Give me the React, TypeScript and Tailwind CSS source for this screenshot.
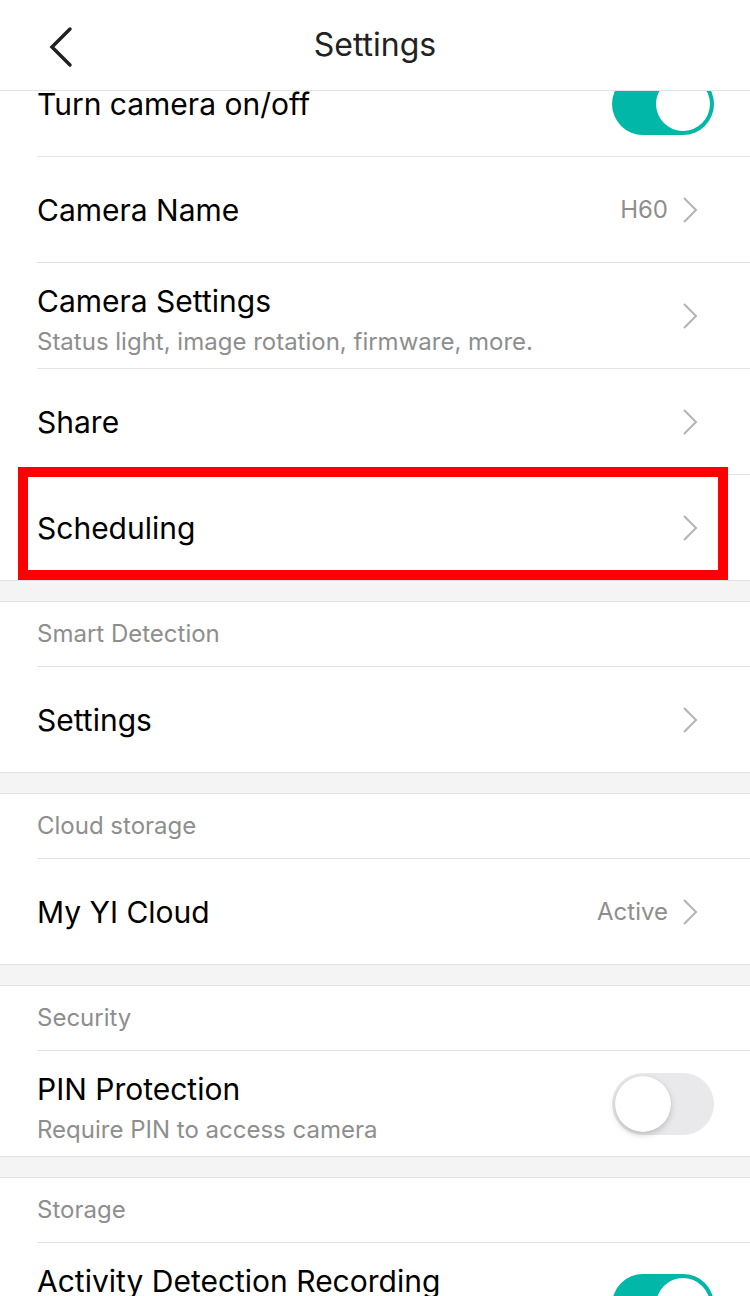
import type { ReactNode } from "react";

function Chevron() {
  return (
    <svg width="16" height="28" viewBox="0 0 16 28" className="shrink-0">
      <path d="M2 2 L14 14 L2 26" fill="none" stroke="#b3b3b3" strokeWidth="2" />
    </svg>
  );
}

function Toggle({ on }: { on: boolean }) {
  if (on) {
    return (
      <div className="w-[102px] h-[62px] rounded-full bg-[#00b7a8] flex items-center justify-end pr-[4px] shrink-0">
        <div className="w-[54px] h-[54px] rounded-full bg-white" />
      </div>
    );
  }
  return (
    <div className="w-[102px] h-[62px] rounded-full bg-[#e9e9eb] flex items-center pl-[3px] shrink-0">
      <div className="w-[56px] h-[56px] rounded-full bg-white shadow-[0_3px_6px_rgba(0,0,0,0.18),0_0_1px_rgba(0,0,0,0.15)]" />
    </div>
  );
}

type RowProps = {
  title: string;
  subtitle?: string;
  value?: string;
  right?: ReactNode;
  last?: boolean;
  tall?: boolean;
};

function Row({ title, subtitle, value, right, last, tall }: RowProps) {
  let size = last ? "h-[105px]" : "h-[106px] border-b border-[#e3e3e3]";
  if (tall) size = "h-[124px]";
  return (
    <div className={"ml-[37px] flex items-center " + size}>
      <div className={"flex-1 flex flex-col " + (tall ? "pb-[48px]" : subtitle ? "pt-[8px]" : "")}>
        <p className="text-[30px] leading-[36px] text-black">{title}</p>
        {subtitle && <p className="text-[24px] leading-[28px] mt-[9px] text-[#8e8e8e]">{subtitle}</p>}
      </div>
      {right ?? (
        <div className="flex items-center gap-[14px] pr-[52px]">
          {value && <span className="text-[24px] text-[#8e8e8e]">{value}</span>}
          <Chevron />
        </div>
      )}
    </div>
  );
}

function SectionTitle({ children }: { children: string }) {
  return (
    <div className="ml-[37px] h-[65px] flex items-center border-b border-[#e3e3e3]">
      <p className="text-[24px] text-[#8e8e8e]">{children}</p>
    </div>
  );
}

function Group({ children, top = true }: { children: ReactNode; top?: boolean }) {
  return (
    <div className={"bg-white border-b border-[#e3e3e3] " + (top ? "border-t" : "")}>{children}</div>
  );
}

export default function App() {
  const toggleWrap = (on: boolean) => <div className="pr-[36px]"><Toggle on={on} /></div>;

  return (
    <div className="w-[750px] h-[1296px] overflow-hidden bg-[#f4f4f4] font-['Inter',sans-serif]">
      <header className="relative z-10 h-[91px] bg-white border-b border-[#e3e3e3] flex items-center justify-center">
        <button className="absolute left-[44px] top-[26px]">
          <svg width="32" height="42" viewBox="0 0 32 42">
            <path d="M26 3 L8 21 L26 39" fill="none" stroke="#222" strokeWidth="3.5" strokeLinecap="round" />
          </svg>
        </button>
        <h1 className="text-[32px] text-[#222]">Settings</h1>
      </header>

      <div className="-mt-[40px] flex flex-col gap-[20px]">
        <Group top={false}>
          <Row title="Turn camera on/off" right={toggleWrap(true)} />
          <Row title="Camera Name" value="H60" />
          <Row title="Camera Settings" subtitle="Status light, image rotation, firmware, more." />
          <Row title="Share" />
          <div className="relative">
            <Row title="Scheduling" last />
            <div className="absolute left-[18px] top-[-8px] w-[710px] h-[113px] border-[10px] border-[#ff0000]" />
          </div>
        </Group>

        <Group>
          <SectionTitle>Smart Detection</SectionTitle>
          <Row title="Settings" last />
        </Group>

        <Group>
          <SectionTitle>Cloud storage</SectionTitle>
          <Row title="My YI Cloud" value="Active" last />
        </Group>

        <Group>
          <SectionTitle>Security</SectionTitle>
          <Row title="PIN Protection" subtitle="Require PIN to access camera" right={toggleWrap(false)} last />
        </Group>

        <Group>
          <SectionTitle>Storage</SectionTitle>
          <Row title="Activity Detection Recording" right={toggleWrap(true)} tall />
        </Group>
      </div>
    </div>
  );
}
